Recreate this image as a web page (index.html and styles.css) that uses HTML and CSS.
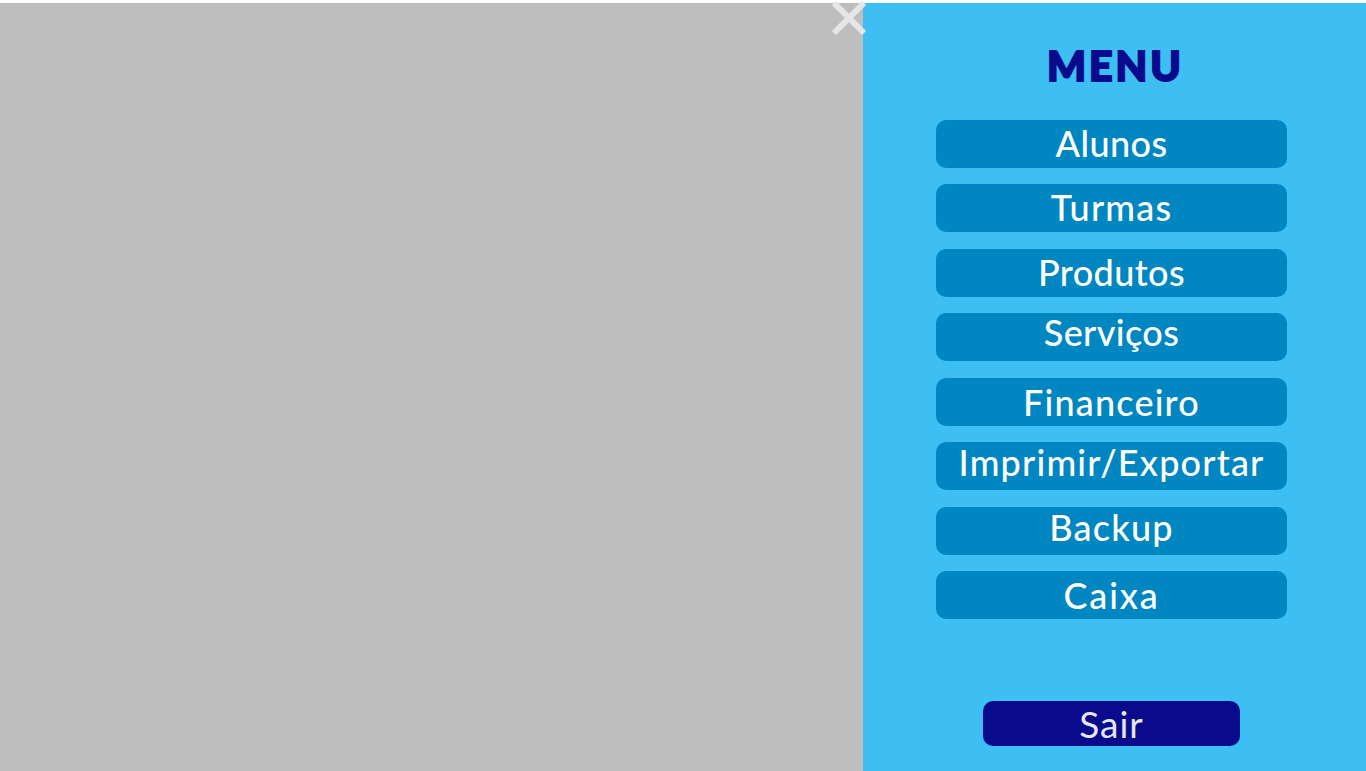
FILE: index.html
```html
<!DOCTYPE html>
<html lang="pt-BR">
<head>
  <meta charset="UTF-8">
  <meta name="viewport" content="width=device-width, initial-scale=1.0">
  <link rel="stylesheet" href="styles.css">
  <title>Menu</title>
</head>
<body>
  <div class="screen">
    <div class="overlay">
      <svg class="close_icon" width="36" height="34" viewBox="0 0 36 34">
        <path d="M3 2 L33 32 M33 2 L3 32" stroke="#e6e6e6" stroke-width="6" fill="none"/>
      </svg>
    </div>
    <nav class="side_menu">
      <h1 class="menu_title">MENU</h1>
      <ul class="menu_list">
        <li><a href="#" class="menu_btn">Alunos</a></li>
        <li><a href="#" class="menu_btn wide">Turmas</a></li>
        <li><a href="#" class="menu_btn">Produtos</a></li>
        <li><a href="#" class="menu_btn up">Serviços</a></li>
        <li><a href="#" class="menu_btn low wide">Financeiro</a></li>
        <li><a href="#" class="menu_btn mid wide">Imprimir/Exportar</a></li>
        <li><a href="#" class="menu_btn mid wide">Backup</a></li>
        <li><a href="#" class="menu_btn low wider">Caixa</a></li>
      </ul>
      <a href="#" class="exit_btn">Sair</a>
    </nav>
  </div>
</body>
</html>
```

FILE: styles.css
```css
html, body {
  margin: 0; padding: 0; height: 100%;
  background: #fff;
}

ul, li {
  margin: 0; padding: 0; list-style: none;
}

.screen {
  display: flex;
  position: relative;
  height: 768px;
  margin-top: 3px;
  font-family: "Lato", "Liberation Sans", sans-serif;
}

.overlay {
  flex: 1;
  background: #bebebe;
}

.close_icon {
  position: absolute;
  left: 831px;
  top: -2px;
}

.side_menu {
  box-sizing: border-box;
  width: 503px;
  padding-right: 6px;
  background: #3dbff3;
  display: flex;
  flex-direction: column;
  align-items: center;
}

.menu_title {
  margin: 40px 0 0;
  padding-left: 8px;
  height: 76.9px;
  font-family: "Lato", sans-serif;
  font-size: 41px;
  font-weight: 900;
  line-height: 46px;
  letter-spacing: 3px;
  color: #0a0a8c;
  -webkit-text-stroke: 2px #0a0a8c;
}

.menu_list {
  display: flex;
  flex-direction: column;
  gap: 16.5px;
}

.menu_btn {
  display: block;
  box-sizing: border-box;
  width: 351.5px;
  height: 48px;
  padding-top: 4px;
  border-radius: 10px;
  background: #0086c0;
  color: #fff;
  font-size: 36px;
  font-weight: 500;
  line-height: 38px;
  letter-spacing: 0.4px;
  text-align: center;
  text-decoration: none;
}

.menu_btn.up {
  padding-top: 0;
}

.menu_btn.mid {
  padding-top: 1px;
}

.menu_btn.low {
  padding-top: 5px;
}

.menu_btn.wide {
  letter-spacing: 1.2px;
}

.menu_btn.wider {
  letter-spacing: 1.8px;
}

.exit_btn {
  display: block;
  box-sizing: border-box;
  width: 257px;
  height: 45px;
  margin-top: 81.6px;
  border-radius: 10px;
  background: #0a0a8c;
  color: #e6e6f0;
  font-size: 37px;
  line-height: 46px;
  letter-spacing: 1px;
  text-align: center;
  text-decoration: none;
}
```
